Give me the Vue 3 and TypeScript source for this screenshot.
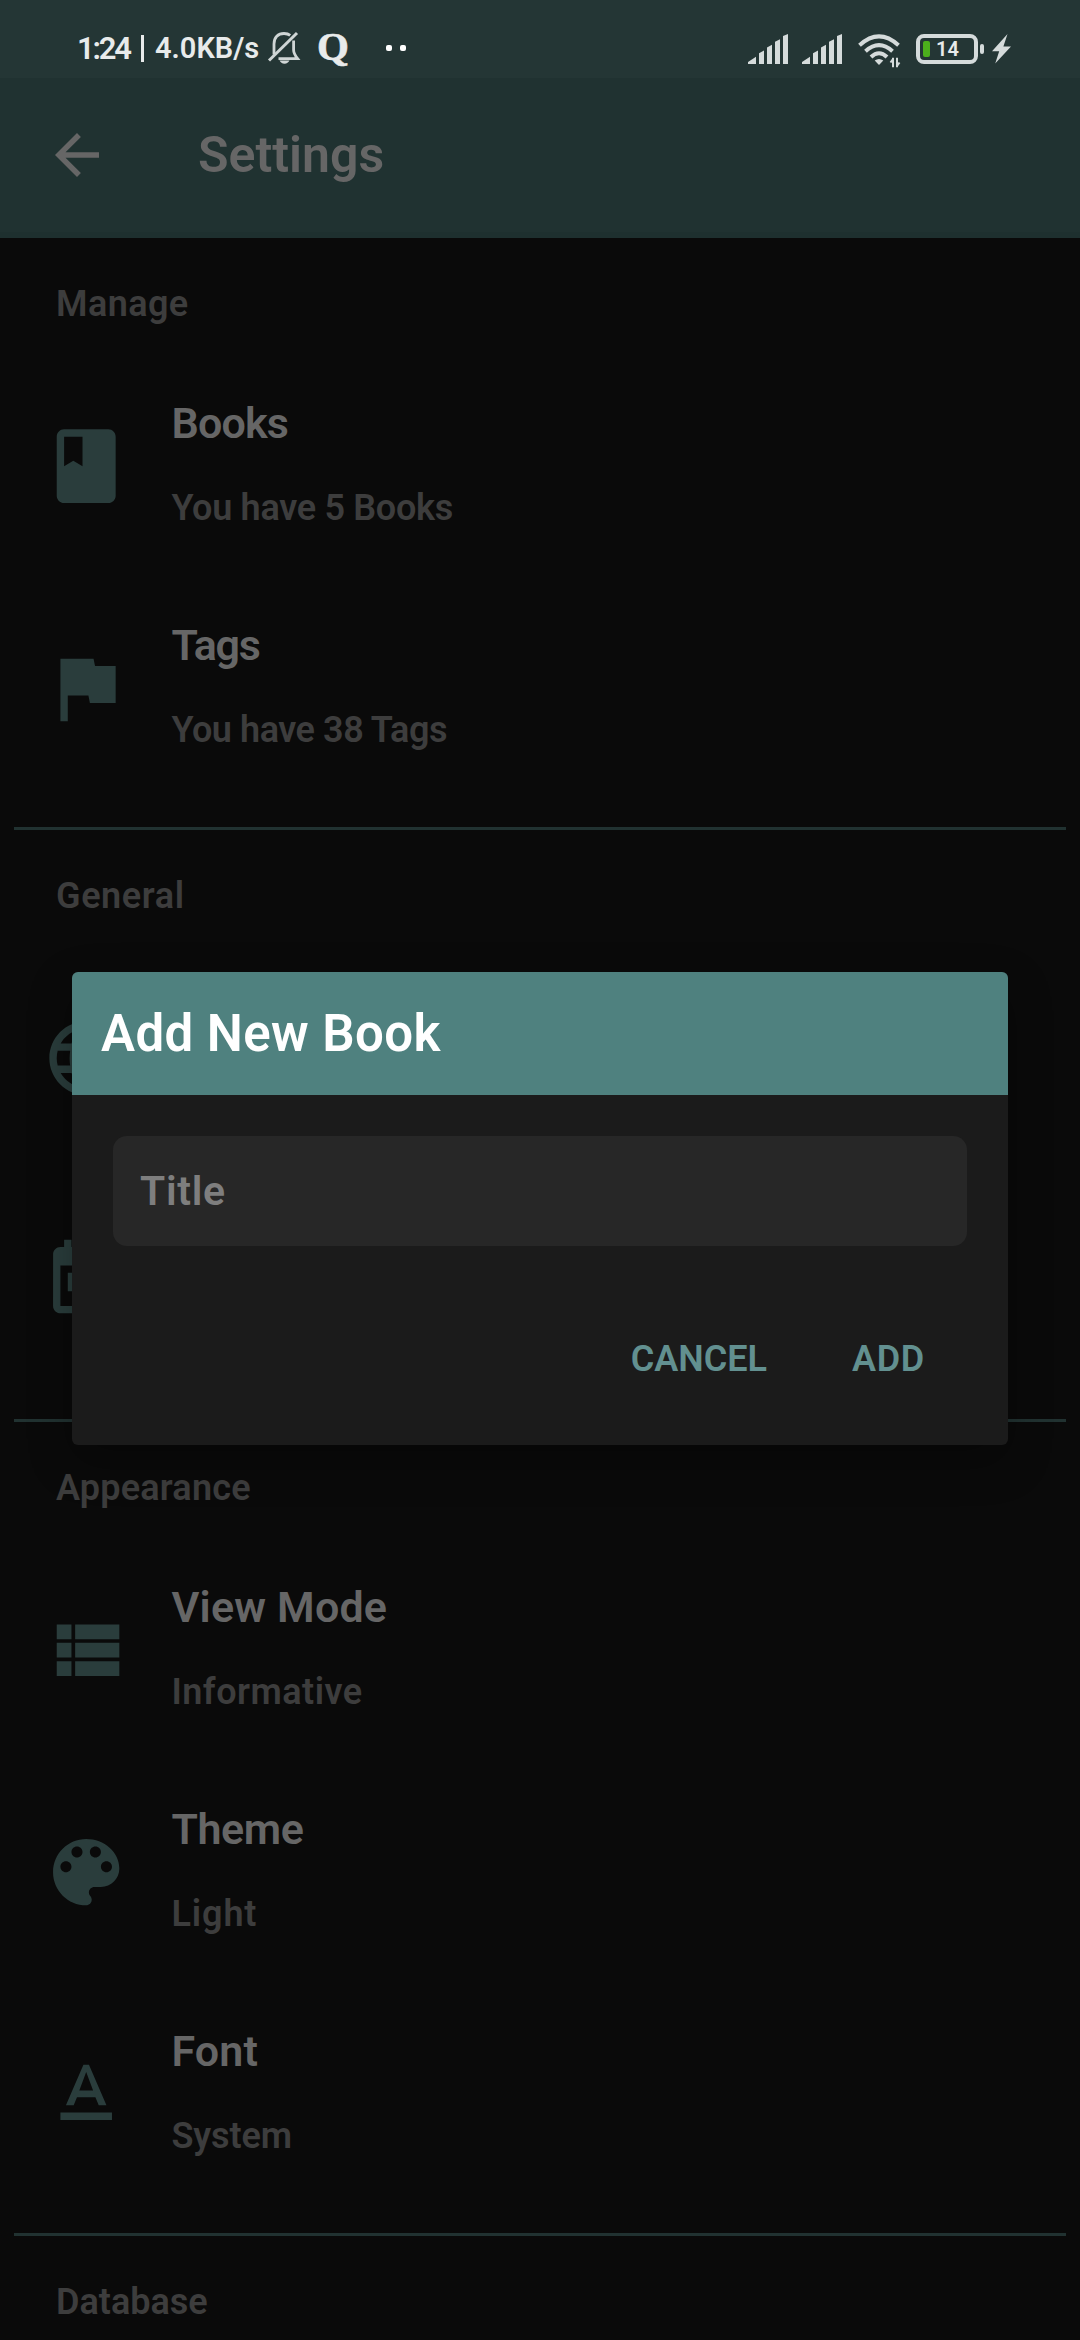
<script setup lang="ts">
interface Row { title: string; sub: string; icon: string; ts?: number; ss?: number }
interface Section { name: string; ls: number; rows: Row[] }

const icons = {
  book: 'M18 2H6c-1.1 0-2 .9-2 2v16c0 1.100.9 2 2 2h12c1.100 0 2-.9 2-2V4c0-1.100-.9-2-2-2zM6 4h5v8l-2.500-1.500L6 12V4z',
  flag: 'M14.400 6L14 4H5v17h2v-7h5.600l.4 2h7V6z',
  globe: 'M11.990 2C6.470 2 2 6.480 2 12s4.470 10 9.990 10C17.520 22 22 17.520 22 12S17.520 2 11.990 2zm6.930 6h-2.950c-.32-1.250-.78-2.450-1.380-3.560 1.840.63 3.370 1.910 4.330 3.560zM12 4.040c.83 1.200 1.480 2.530 1.910 3.960h-3.820c.43-1.430 1.080-2.760 1.910-3.960zM4.260 14C4.100 13.360 4 12.690 4 12s.1-1.360.26-2h3.380c-.08.66-.14 1.320-.14 2s.06 1.340.14 2H4.260zm.82 2h2.950c.32 1.250.78 2.450 1.380 3.560-1.840-.63-3.370-1.900-4.330-3.560zm2.950-8H5.080c.96-1.660 2.490-2.930 4.330-3.560C8.810 5.550 8.350 6.750 8.030 8zM12 19.960c-.83-1.200-1.480-2.530-1.910-3.960h3.820c-.43 1.430-1.080 2.760-1.910 3.960zM14.340 14H9.660c-.09-.66-.16-1.320-.16-2s.07-1.350.16-2h4.680c.09.65.16 1.320.16 2s-.07 1.340-.16 2zm.25 5.560c.6-1.110 1.060-2.310 1.380-3.560h2.950c-.96 1.650-2.490 2.930-4.330 3.560zM16.360 14c.08-.66.14-1.320.14-2s-.06-1.340-.14-2h3.380c.16.64.26 1.310.26 2s-.1 1.360-.26 2h-3.380z',
  today: 'M19 3h-1V1h-2v2H8V1H6v2H5c-1.110 0-1.990.9-1.990 2L3 19c0 1.100.89 2 2 2h14c1.100 0 2-.9 2-2V5c0-1.100-.9-2-2-2zm0 16H5V8h14v11zM7 10h5v5H7z',
  list: 'M4 14h4v-4H4v4zm0 5h4v-4H4v4zM4 9h4V5H4v4zm5 5h12v-4H9v4zm0 5h12v-4H9v4zM9 5v4h12V5H9z',
  palette: 'M12 3c-4.970 0-9 4.030-9 9s4.030 9 9 9c.83 0 1.500-.67 1.500-1.500 0-.39-.15-.74-.39-1.010-.23-.26-.38-.61-.38-.99 0-.83.67-1.500 1.500-1.500H16c2.760 0 5-2.240 5-5 0-4.420-4.030-8-9-8zm-5.500 9c-.83 0-1.500-.67-1.500-1.500S5.670 9 6.500 9 8 9.670 8 10.500 7.330 12 6.500 12zm3-4C8.670 8 8 7.330 8 6.500S8.670 5 9.500 5s1.500.67 1.500 1.500S10.330 8 9.500 8zm5 0c-.83 0-1.500-.67-1.500-1.500S13.670 5 14.500 5s1.500.67 1.500 1.500S15.330 8 14.500 8zm3 4c-.83 0-1.500-.67-1.500-1.500S16.670 9 17.500 9s1.500.67 1.500 1.500-.67 1.500-1.500 1.500z',
  format: 'M5 17v2h14v-2H5zm4.500-4.200h5l.9 2.200h2.100L12.750 4h-1.500L6.500 15h2.100l.9-2.200zM12 5.980L13.870 11h-3.740L12 5.980z',
} as Record<string, string>

const sections: Section[] = [
  { name: 'Manage', ls: 0.4, rows: [
    { title: 'Books', sub: 'You have 5 Books', icon: 'book', ts: -0.8, ss: -0.3 },
    { title: 'Tags', sub: 'You have 38 Tags', icon: 'flag', ts: -1.2, ss: -0.45 },
  ] },
  { name: 'General', ls: 0.6, rows: [
    { title: '', sub: '', icon: 'globe' },
    { title: '', sub: '', icon: 'today' },
  ] },
  { name: 'Appearance', ls: 0.2, rows: [
    { title: 'View Mode', sub: 'Informative', icon: 'list', ts: 0.2, ss: 0.5 },
    { title: 'Theme', sub: 'Light', icon: 'palette', ts: -0.4, ss: 0.9 },
    { title: 'Font', sub: 'System', icon: 'format', ts: 0.2, ss: -0.1 },
  ] },
  { name: 'Database', ls: 0, rows: [] },
]
const px = (n?: number) => ({ letterSpacing: `${n ?? 0}px` })
const bars = ['M0 29V27L8 22V29Z', 'M11 29V18.500L16 16V29Z', 'M19 29V13L24 10.500V29Z', 'M27 29V7.500L32 5V29Z', 'M35 29V2L40 0V29Z'].join('')
</script>

<template>
  <div class="screen">
    <div class="status">
      <div class="left">
        <span class="clock">1:24</span>
        <span class="sep"></span>
        <span class="speed">4.0KB/s</span>
        <svg class="bell" width="34" height="34" viewBox="0 0 34 34" fill="none" stroke="#cfd5d5" stroke-width="2.800">
          <path d="M7 23.500V13C7 6.500 11 2.500 17 2.500c2.500 0 4.600.6 6.200 1.900M26.600 9.500V19c0 3 1.500 5.500 4 8.700H11.500" />
          <path d="M2 29.500L30 2" stroke-width="3" />
          <path d="M12.500 29.500h10c-1 2-2.600 3.200-5 3.200s-4-1.200-5-3.200z" fill="#cfd5d5" stroke="none" />
        </svg>
        <span class="quora">Q</span>
        <span class="dots"><i></i><i></i></span>
      </div>
      <div class="right">
        <svg width="40" height="30" viewBox="0 0 40 29" preserveAspectRatio="none" fill="#d5dbdb"><path :d="bars" /></svg>
        <svg class="sig2" width="40" height="30" viewBox="0 0 40 29" preserveAspectRatio="none" fill="#d5dbdb"><path :d="bars" /></svg>
        <svg class="wifi" width="43" height="34" viewBox="0 0 43 34" fill="none" stroke="#d5dbdb" stroke-width="4">
          <path d="M1.500 11.200Q21 -6.500 40.500 11.200" />
          <path d="M7.500 17.200Q21 5 34.500 17.200" />
          <path d="M13 23Q21 15.500 29 23" />
          <path d="M21 31l-4.300-4.500q4.300-3 8.600 0z" fill="#d5dbdb" stroke="none" />
          <path d="M35 23.800v9.500M32.500 28.500l2.500-3.500M39 33.300V23.800M41.500 28.500l-2.500 3.500" stroke-width="2" />
        </svg>
        <div class="battery"><i></i><span>14</span></div>
        <div class="nub"></div>
        <svg class="bolt" width="19" height="30" viewBox="0 0 19 30" fill="#d5dbdb"><path d="M15.500 0L0 17.200h7.200L3.200 29.500 19 12.500h-7.600z" /></svg>
      </div>
    </div>
    <div class="appbar">
      <svg width="66" height="66" viewBox="0 0 24 24" fill="#666"><path d="M20 11H7.830l5.590-5.590L12 4l-8 8 8 8 1.410-1.410L7.830 13H20v-2z" /></svg>
      <h1>Settings</h1>
    </div>
    <section v-for="s in sections" :key="s.name">
      <h2 :style="px(s.ls)">{{ s.name }}</h2>
      <div v-for="r in s.rows" :key="r.icon" class="row">
        <svg width="88.400" height="88.400" viewBox="0 0 24 24" fill="#2a3d3c"><path :d="icons[r.icon]" /></svg>
        <div class="txt">
          <div class="title" :style="px(r.ts)">{{ r.title }}</div>
          <div class="sub" :style="px(r.ss)">{{ r.sub }}</div>
        </div>
      </div>
      <div v-if="s.rows.length" class="divider"></div>
    </section>

    <div class="dialog">
      <div class="dhead">Add New Book</div>
      <div class="field">Title</div>
      <div class="actions"><span>CANCEL</span><span class="add">ADD</span></div>
    </div>
  </div>
</template>

<style>
body { background: #0a0a0a; }
</style>
<style scoped>
.screen { position: relative; width: 1080px; height: 2340px; overflow: hidden; background: #0a0a0a; font-family: Roboto, "Noto Sans", sans-serif; font-weight: 600; }
svg { display: block; flex: none; }
.status { height: 78px; background: #243635; display: flex; justify-content: space-between; color: #e8ebeb; }
.left { display: flex; align-items: center; height: 96px; padding-left: 77px; }
.clock { width: 64px; font-size: 31px; letter-spacing: -2.2px; }
.sep { width: 3px; height: 27px; background: #e8ebeb; }
.speed { width: 111px; margin-left: 11px; font-size: 29px; }
.bell { margin-left: 1px; }
.quora { width: 69px; margin: -4px 0 0 16px; font: bold 41px/40px "Liberation Serif", serif; -webkit-text-stroke: 0.6px #e8ebeb; }
.dots { display: flex; gap: 8px; }
.dots i { width: 6px; height: 6px; border-radius: 2px; background: #fff; }
.right { display: flex; align-items: center; height: 98px; padding-right: 69px; }
.sig2 { margin-left: 14px; }
.wifi { margin: 4px 0 0 16px; }
.battery { box-sizing: border-box; width: 62px; height: 30px; margin-left: 15px; border: 4px solid #d5dbdb; border-radius: 8px; display: flex; align-items: center; padding-left: 3px; }
.battery i { width: 7px; height: 16px; border-radius: 2px; background: #4caf1c; }
.battery span { margin-left: 6px; font-size: 20px; line-height: 22px; }
.nub { width: 4px; height: 10px; margin-left: 2px; border-radius: 2px; background: #d5dbdb; }
.bolt { margin-left: 8px; }
.appbar { box-sizing: border-box; height: 160px; background: #203231; border-bottom: 6px solid #1e302f; padding-left: 44px; display: flex; align-items: center; }
h1 { margin: 0 0 0 88px; font-size: 50px; font-weight: 600; line-height: 60px; color: #666; }
h2 { margin: 0; box-sizing: border-box; height: 117px; padding: 41px 0 0 56px; font-size: 36px; font-weight: 600; line-height: 50px; color: #3d3d3d; }
.row { height: 222px; display: flex; align-items: center; padding-left: 42px; }
.txt { align-self: flex-start; padding-top: 38px; margin-left: 41px; }
.title { height: 60px; font-size: 43px; line-height: 60px; color: #666; }
.sub { height: 50px; margin-top: 30px; font-size: 36px; line-height: 50px; color: #3d3d3d; }
.divider { height: 3px; margin: 28px 14px 0; background: #213231; }
.dialog { position: absolute; left: 72px; top: 972px; width: 936px; height: 473px; border-radius: 6px; overflow: hidden; background: #1b1b1b; box-shadow: 0 16px 44px rgba(0, 0, 0, 0.3); }
.dhead { height: 123px; padding-left: 29px; background: #4f817f; color: #fff; font-size: 51px; line-height: 123px; letter-spacing: 0.4px; }
.field { height: 110px; margin: 41px 41px 0; padding-left: 27px; border-radius: 14px; background: #272727; color: #7e7e7e; font-size: 41px; line-height: 110px; letter-spacing: 0.7px; }
.actions { display: flex; justify-content: flex-end; gap: 85px; margin-top: 88px; padding-right: 83px; font-size: 36px; line-height: 50px; color: #629090; }
.add { letter-spacing: 0.7px; }
</style>
